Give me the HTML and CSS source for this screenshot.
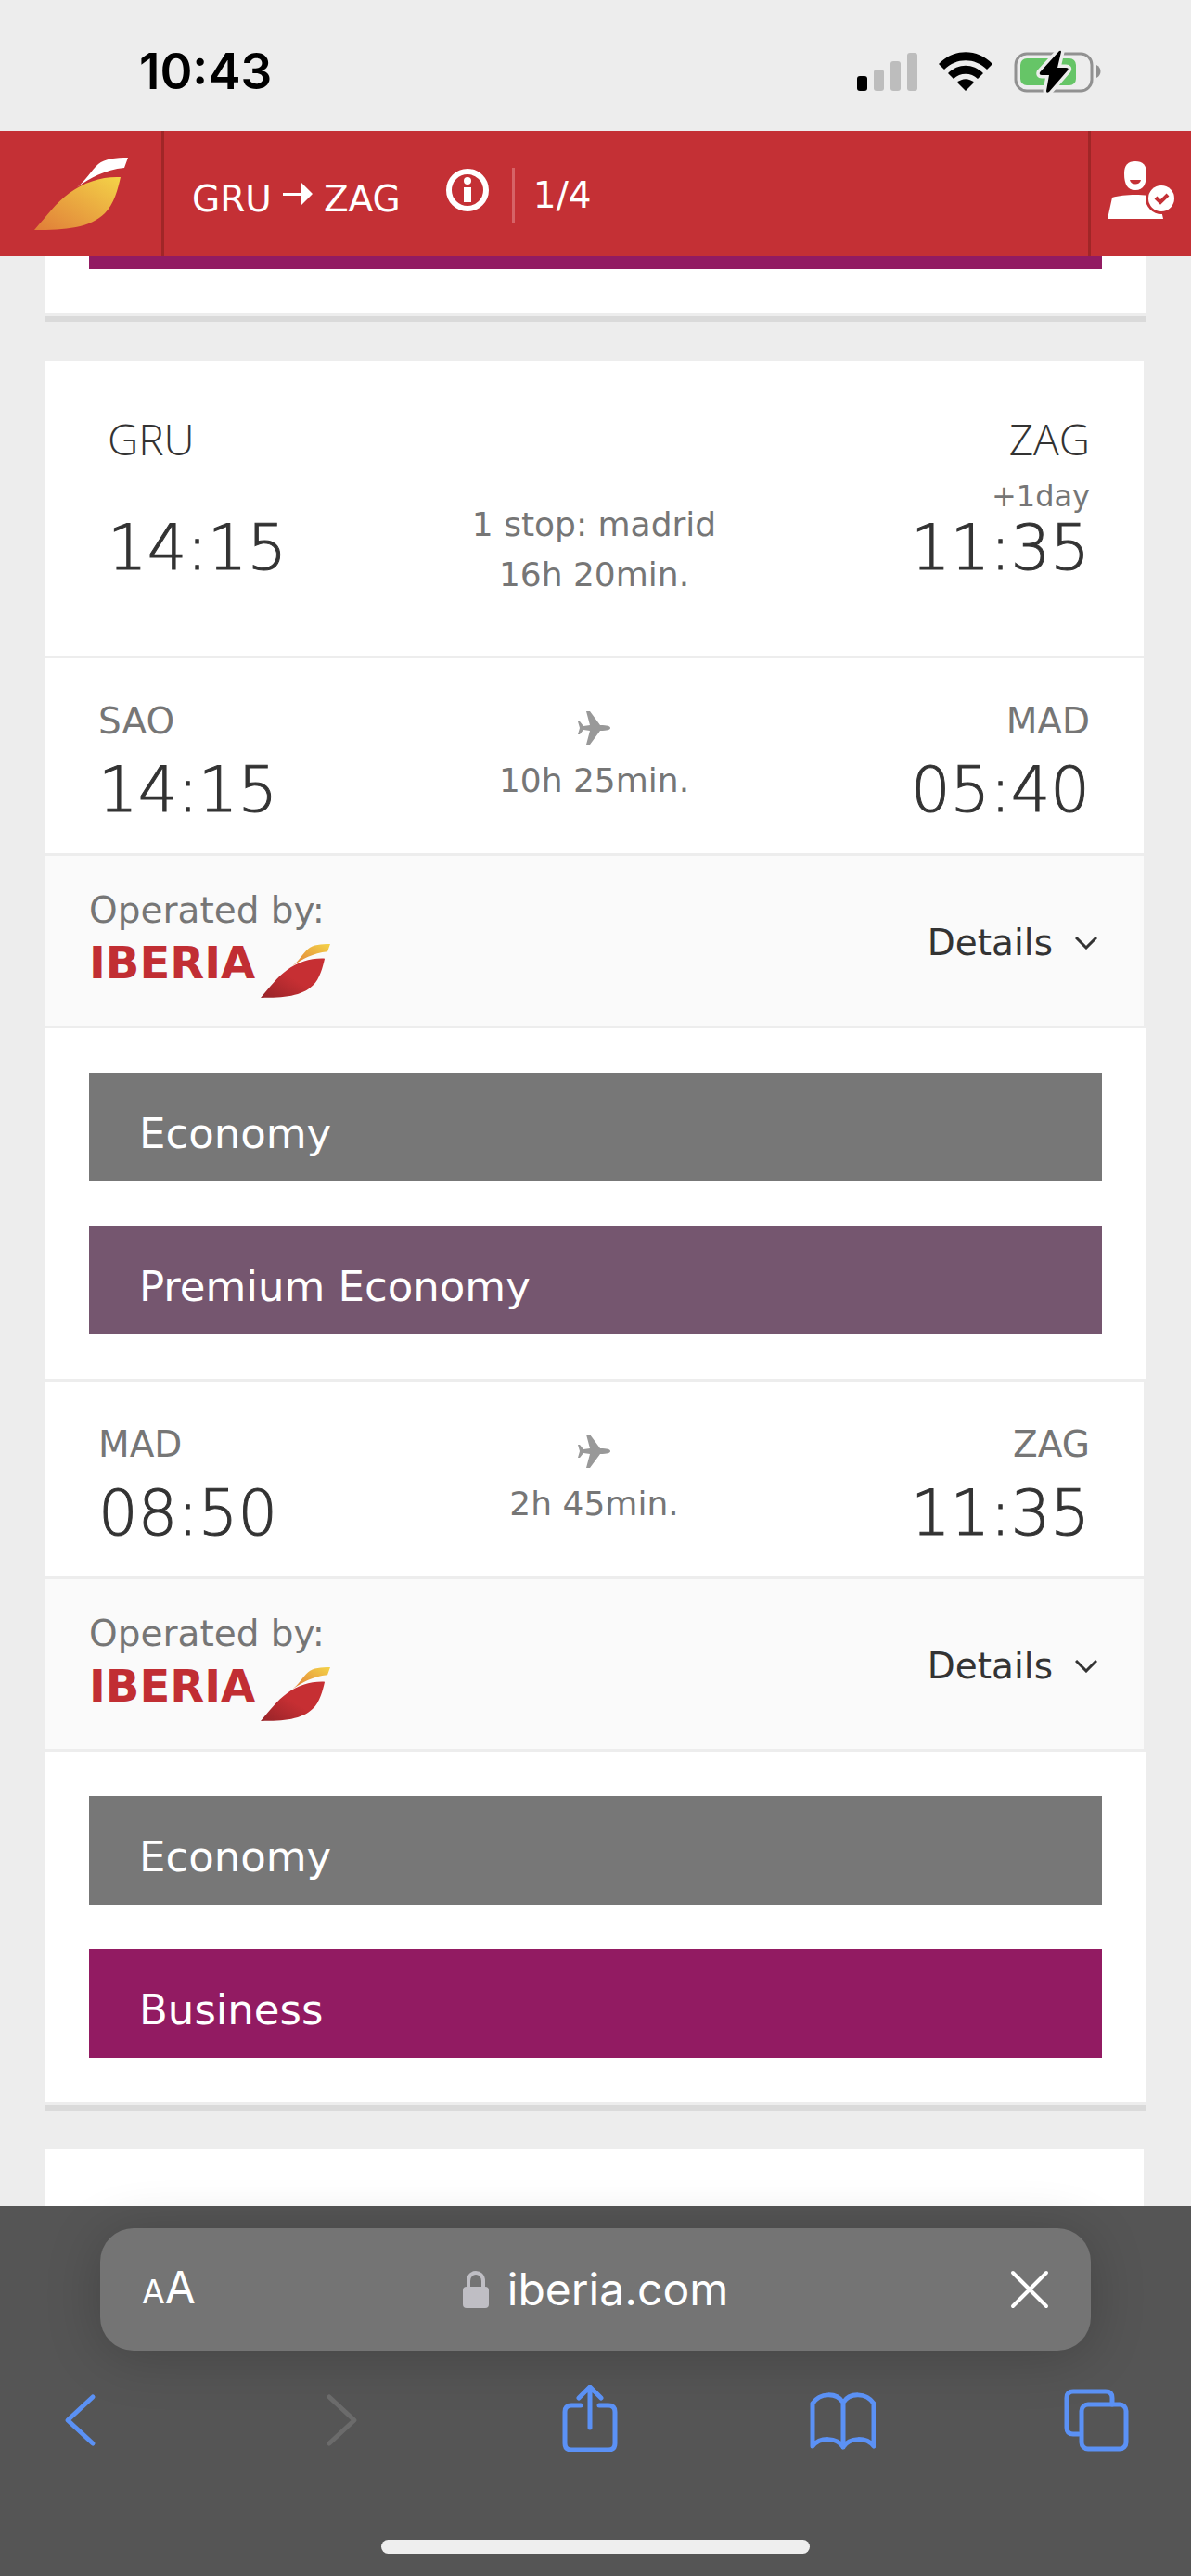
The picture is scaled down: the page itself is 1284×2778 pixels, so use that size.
FILE: index.html
```html
<!DOCTYPE html>
<html lang="en">
<head>
<meta charset="UTF-8" />
<meta name="viewport" content="width=device-width, initial-scale=1" />
<title>Iberia - Flight results</title>
<link rel="stylesheet" href="styles.css">
</head>
<body>

<!-- Shared shapes -->
<svg class="sprite" aria-hidden="true">
  <defs>
    <linearGradient id="gold" x1="0" y1="1" x2="1" y2="0">
      <stop offset="0" stop-color="#e07d38" />
      <stop offset="1" stop-color="#f4d348" />
    </linearGradient>
    <linearGradient id="crimson" x1="0" y1="1" x2="1" y2="0">
      <stop offset="0" stop-color="#962328" />
      <stop offset="0.5" stop-color="#c62f33" />
    </linearGradient>
    <symbol id="tail" viewBox="0 0 101 78">
      <path class="tail-feather" d="M46 32C56 24 61 14 69 7C76 1 88 0 101 0L97 11C76 13 60 22 46 32Z" />
      <path class="tail-body" d="M0 78C14 62 24 48 38 38C54 26 74 20 93 21C90 34 86 50 76 60C60 76 34 78 0 78Z" />
    </symbol>
    <symbol id="plane" viewBox="0 0 35 36">
      <path d="M35 18C35 16 32 15 24 15L13 0H9L13 15L6 16L2 11H0L2 18L0 25H2L6 20L13 21L9 36H13L24 21C32 21 35 20 35 18Z" />
    </symbol>
    <symbol id="chevron" viewBox="0 0 24 14">
      <path d="M1 1L12 12L23 1" fill="none" stroke="#333" stroke-width="3" />
    </symbol>
  </defs>
</svg>

<div class="status-bar">
  <span class="clock">10:43</span>
  <div class="status-icons">
    <svg width="65" height="50" viewBox="0 0 65 50" aria-label="Signal">
      <rect x="0" y="30" width="11" height="16" rx="3" />
      <rect x="18" y="23" width="11" height="23" rx="3" fill="#bdbdbd" />
      <rect x="36" y="14" width="11" height="32" rx="3" fill="#bdbdbd" />
      <rect x="54" y="5" width="11" height="41" rx="3" fill="#bdbdbd" />
    </svg>
    <svg width="58" height="50" viewBox="0 0 58 50" aria-label="Wi-Fi">
      <path d="M0 17C16 0 42 0 58 17L52 23C39 10 19 10 6 23Z" />
      <path d="M10 27C21 16 37 16 48 27L42 33C35 26 23 26 16 33Z" />
      <path d="M20 37C25 32 33 32 38 37L29 46Z" />
    </svg>
    <svg width="94" height="50" viewBox="0 0 94 50" aria-label="Battery charging">
      <rect x="2" y="6" width="82" height="40" rx="12" fill="none" stroke="#919191" stroke-width="3" />
      <rect x="7" y="11" width="60" height="29" rx="7" fill="#66c567" />
      <path d="M89 18C95 21 95 29 89 32Z" fill="#919191" />
      <path d="M49 3L28 26Q27 29 30 29H38L35 46Q35 49 38 47L58 24Q60 21 56 21H47L51 4Q51 2 49 3Z" stroke="#ededed" stroke-width="7" paint-order="stroke" />
    </svg>
  </div>
</div>

<header class="site-header">
  <a class="home-link" href="#home" aria-label="Iberia home">
    <svg class="tail tail-light" width="101" height="78"><use href="#tail" /></svg>
  </a>
  <div class="search">
    <div class="route">
      <span>GRU</span>
      <svg class="route-arrow" width="32" height="24" viewBox="0 0 32 24" aria-label="to"><path d="M0 11H20V0L32 12L20 24V14H0Z" fill="#fff" /></svg>
      <span>ZAG</span>
    </div>
    <button class="info" aria-label="Search information">
      <svg width="48" height="48" viewBox="0 0 48 48">
        <circle cx="24" cy="24" r="20" fill="none" stroke="#fff" stroke-width="6" />
        <circle cx="24" cy="14" r="4" fill="#fff" />
        <path d="M20 21H28V37H20Z" fill="#fff" />
      </svg>
    </button>
    <span class="step">1/4</span>
  </div>
  <a class="account" href="#account" aria-label="My account">
    <svg width="72" height="62" viewBox="0 0 72 62">
      <path d="M30 0C38 0 42 4 42 13C42 24 39 31 30 31C21 31 18 24 18 13C18 4 22 0 30 0Z" fill="#fff" />
      <path d="M24 20H36C35 26 25 26 24 20Z" fill="#c43035" />
      <path d="M5 39C18 35 42 35 55 39L60 62H0Z" fill="#fff" />
      <circle cx="58" cy="40" r="17" fill="#c43035" />
      <circle cx="58" cy="40" r="14" fill="#fff" />
      <path d="M52 39L57 44L65 36" fill="none" stroke="#c43035" stroke-width="4" />
    </svg>
  </a>
</header>

<main class="results">
  <article class="card card-above" aria-hidden="true">
    <div class="fares"><div class="fare-edge"></div></div>
  </article>

  <article class="card">
    <section class="summary">
      <div class="place place-from">
        <span class="airport">GRU</span>
        <span class="time">14:15</span>
      </div>
      <div class="trip">
        <span>1 stop: madrid</span>
        <span>16h 20min.</span>
      </div>
      <div class="place place-to">
        <span class="airport">ZAG</span>
        <span class="next-day">+1day</span>
        <span class="time">11:35</span>
      </div>
    </section>

    <section class="leg">
      <div class="place">
        <span class="code">SAO</span>
        <span class="time">14:15</span>
      </div>
      <div class="flight">
        <svg class="plane" width="35" height="36"><use href="#plane" /></svg>
        <span>10h 25min.</span>
      </div>
      <div class="place place-to">
        <span class="code">MAD</span>
        <span class="time">05:40</span>
      </div>
    </section>
    <section class="operator">
      <div class="operated-by">
        <span>Operated by:</span>
        <div class="brand">
          <span class="brand-name">IBERIA</span>
          <svg class="tail" width="75" height="58"><use href="#tail" /></svg>
        </div>
      </div>
      <button class="details">Details <svg width="24" height="14"><use href="#chevron" /></svg></button>
    </section>
    <section class="fares">
      <button class="fare economy">Economy</button>
      <button class="fare premium">Premium Economy</button>
    </section>

    <section class="leg">
      <div class="place">
        <span class="code">MAD</span>
        <span class="time">08:50</span>
      </div>
      <div class="flight">
        <svg class="plane" width="35" height="36"><use href="#plane" /></svg>
        <span>2h 45min.</span>
      </div>
      <div class="place place-to">
        <span class="code">ZAG</span>
        <span class="time">11:35</span>
      </div>
    </section>
    <section class="operator">
      <div class="operated-by">
        <span>Operated by:</span>
        <div class="brand">
          <span class="brand-name">IBERIA</span>
          <svg class="tail" width="75" height="58"><use href="#tail" /></svg>
        </div>
      </div>
      <button class="details">Details <svg width="24" height="14"><use href="#chevron" /></svg></button>
    </section>
    <section class="fares">
      <button class="fare economy">Economy</button>
      <button class="fare business">Business</button>
    </section>
  </article>

  <article class="card card-next"></article>
</main>

<footer class="browser">
  <div class="address-bar">
    <button class="text-size" aria-label="Text size"><small>A</small>A</button>
    <button class="address">
      <svg width="28" height="40" viewBox="0 0 28 40">
        <rect x="0" y="17" width="28" height="23" rx="4" fill="#bfbec4" />
        <path d="M6 19V11C6 -1 22 -1 22 11V19" fill="none" stroke="#bfbec4" stroke-width="4" />
      </svg>
      iberia.com
    </button>
    <button class="stop" aria-label="Stop loading">
      <svg width="42" height="42" viewBox="0 0 42 42"><path d="M3 3L39 39M39 3L3 39" stroke="#fff" stroke-width="4" stroke-linecap="round" /></svg>
    </button>
  </div>
  <nav class="toolbar">
    <button aria-label="Back">
      <svg viewBox="0 0 72 72"><path d="M50 13L23 38L50 63" /></svg>
    </button>
    <button aria-label="Forward" disabled>
      <svg viewBox="0 0 72 72"><path d="M31 13L58 38L31 63" /></svg>
    </button>
    <button aria-label="Share">
      <svg viewBox="0 0 72 72"><path d="M28 22H18Q11 22 11 29V63Q11 70 18 70H58Q65 70 65 63V29Q65 22 58 22H48M38 46V3M26 14L38 2L50 14" /></svg>
    </button>
    <button aria-label="Bookmarks">
      <svg viewBox="0 0 72 72"><path d="M37 19C30 8 12 8 4 20V66C12 56 30 56 37 67C44 56 62 56 70 66V20C62 8 44 8 37 19ZM37 19V67" /></svg>
    </button>
    <button aria-label="Tabs">
      <svg viewBox="0 0 72 72"><path d="M17 53H11Q4 53 4 46V14Q4 7 11 7H46Q53 7 53 14V21" /><rect x="20" y="21" width="48" height="48" rx="7" /></svg>
    </button>
  </nav>
  <div class="home-indicator"></div>
</footer>

</body>
</html>
```
FILE: styles.css
```css
/* Reset and base */
* {
  box-sizing: border-box;
  margin: 0;
  padding: 0;
}
body {
  font-family: Verdana, 'DejaVu Sans', sans-serif;
  font-size: 39px;
  line-height: 48px;
  background: #ededed;
  color: #767676;
  height: 100vh;
  display: flex;
  flex-direction: column;
}
button {
  font: inherit;
  color: inherit;
  background: none;
  border: none;
  cursor: pointer;
}
a {
  color: inherit;
  text-decoration: none;
}
svg {
  display: block;
}
.sprite {
  position: absolute;
  width: 0;
  height: 0;
}

/* Iberia tail */
.tail {
  --feather: url(#gold);
  --body: url(#crimson);
}
.tail-light {
  --feather: #fff;
  --body: url(#gold);
}
.tail-feather {
  fill: var(--feather);
}
.tail-body {
  fill: var(--body);
}

/* Status bar */
.status-bar {
  display: flex;
  align-items: center;
  justify-content: space-between;
  height: 141px;
  padding: 12px 97px 0 150px;
}
.clock {
  font-family: Inter, sans-serif;
  font-size: 53px;
  font-weight: 600;
  color: #000;
}
.status-icons {
  display: flex;
  gap: 23px;
}

/* Header */
.site-header {
  display: flex;
  height: 135px;
  background: #c43035;
  color: #fff;
}
.home-link,
.account {
  display: flex;
  align-items: center;
  justify-content: center;
}
.home-link {
  width: 177px;
  border-right: 3px solid #a02627;
}
.account {
  width: 111px;
  padding-bottom: 8px;
  border-left: 3px solid #a02627;
}
.search {
  flex: 1;
  display: flex;
  align-items: center;
  padding-left: 30px;
}
.route {
  display: flex;
  align-items: center;
  gap: 12px;
  padding-top: 12px;
}
.route-arrow {
  margin-bottom: 12px;
}
.info {
  margin: 0 24px 8px 48px;
}
.step {
  line-height: 60px;
  padding-left: 20px;
  margin-top: 4px;
  border-left: 3px solid #d66367;
}

/* Result cards */
.results {
  flex: 1;
  min-height: 0;
  overflow: hidden;
  display: flex;
  flex-direction: column;
  gap: 42px;
  padding: 0 48px;
}
.card {
  flex-shrink: 0;
  border-bottom: 6px solid #dadada;
}
.card-above .fares {
  padding-top: 0;
}
.fare-edge {
  height: 14px;
  background: #921b62;
}
.card-next {
  flex: 1;
  background: #fff;
  border-right: 3px solid #ededed;
  border-bottom: none;
}

.summary,
.leg,
.operator {
  background: #fff;
  border-right: 3px solid #ededed;
  border-bottom: 3px solid #ededed;
}
.summary,
.leg {
  display: grid;
  grid-template-columns: 1fr auto 1fr;
}
.summary {
  padding: 54px 58px 60px;
}
.leg {
  padding: 44px 58px 28px;
}
.place {
  display: flex;
  flex-direction: column;
}
.place-from {
  padding-left: 10px;
}
.place-to {
  text-align: right;
}
.airport {
  font-family: 'Open Sans', sans-serif;
  font-size: 46px;
  font-weight: 300;
  line-height: 60px;
  color: #333;
}
.time {
  font-family: 'DejaVu Sans Light', 'DejaVu Sans', sans-serif;
  font-size: 67px;
  font-weight: 200;
  line-height: 80px;
  color: #333;
  -webkit-text-stroke: 1px #333;
}
.place-from .time {
  margin-top: 48px;
}
.next-day {
  font-size: 32px;
  line-height: 32px;
  padding-top: 16px;
}
.leg .time {
  margin-top: 10px;
}
.trip,
.flight {
  display: flex;
  flex-direction: column;
  align-items: center;
  font-size: 36px;
  line-height: 54px;
}
.trip {
  padding-top: 96px;
}
.flight {
  gap: 12px;
  padding-top: 13px;
}
.plane {
  fill: #999;
}

/* Operating airline */
.operator {
  display: flex;
  align-items: center;
  justify-content: space-between;
  padding: 35px 50px 30px 48px;
  background: #fafafa;
}
.operated-by {
  display: flex;
  flex-direction: column;
  gap: 12px;
}
.brand {
  display: flex;
  gap: 6px;
}
.brand-name {
  font-size: 48px;
  font-weight: 700;
  line-height: 40px;
  color: #c12e33;
}
.details {
  display: flex;
  align-items: center;
  gap: 24px;
  color: #333;
}

/* Fares */
.fares {
  display: flex;
  flex-direction: column;
  gap: 48px;
  padding: 48px;
  background: #fff;
  border-bottom: 3px solid #ededed;
}
.fare {
  padding: 39px 54px 24px;
  font-size: 45px;
  line-height: 54px;
  text-align: left;
  color: #fff;
}
.economy {
  background: #777;
}
.premium {
  background: #75566f;
}
.business {
  background: #921b62;
}

/* Browser controls */
.browser {
  position: relative;
  padding: 24px 0;
  background: #555;
  font-family: Inter, sans-serif;
  font-size: 48px;
  color: #fff;
}
.address-bar {
  display: grid;
  grid-template-columns: 1fr auto 1fr;
  align-items: center;
  height: 132px;
  margin: 0 108px;
  padding: 0 45px;
  border-radius: 36px;
  background: #747474;
  box-shadow: 0 6px 60px rgba(0, 0, 0, 0.2);
}
.text-size {
  justify-self: start;
}
.text-size small {
  font-size: 36px;
}
.address {
  display: flex;
  align-items: center;
  gap: 20px;
}
.stop {
  justify-self: end;
}
.toolbar {
  display: flex;
  justify-content: space-between;
  padding: 37px 66px 0 50px;
}
.toolbar svg {
  width: 72px;
  height: 72px;
  fill: none;
  stroke: #5b91f5;
  stroke-width: 5;
  stroke-linecap: round;
  stroke-linejoin: round;
}
.toolbar button:disabled svg {
  stroke: #6b6b6b;
}
.home-indicator {
  width: 36%;
  height: 15px;
  margin: 95px auto 0;
  border-radius: 8px;
  background: #eee;
}
```
